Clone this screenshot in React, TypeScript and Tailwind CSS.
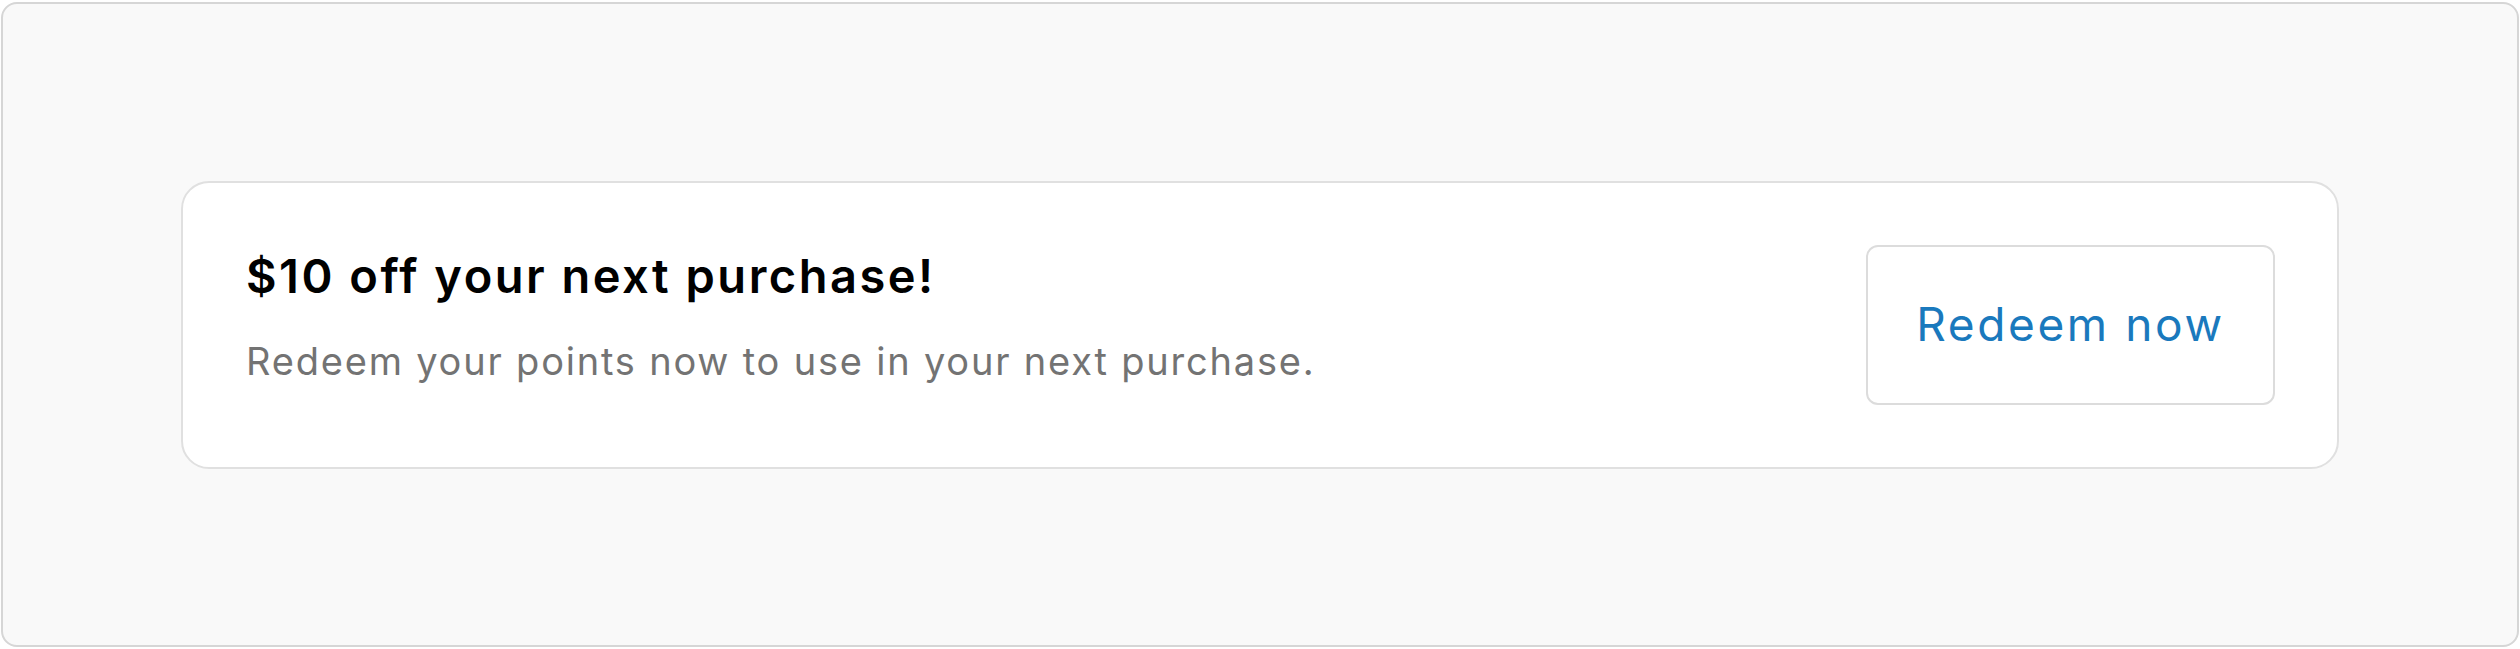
export default function App() {
  return (
    <div className="h-[649px] w-full p-[1px] pt-[2px] pb-[2px] bg-white" style={{ fontFamily: 'Inter, "Noto Sans", sans-serif' }}>
      <div className="flex h-full items-center justify-center rounded-[16px] border-2 border-[#d6d6d6] bg-[#f9f9f9] px-[178px]">
        <div className="flex w-full items-center justify-between rounded-[28px] border-2 border-[#e0e0e0] bg-white p-[62px] pl-[63px]">
          <div className="flex flex-col pb-[19px]">
            <h2 className="text-[47px] font-semibold leading-[56px] tracking-[2.5px] text-black">
              $10 off your next purchase!
            </h2>
            <p className="mt-[35px] text-[38px] leading-[44px] tracking-[1.8px] text-[#737373]">
              Redeem your points now to use in your next purchase.
            </p>
          </div>
          <button className="flex h-[160px] w-[409px] items-center justify-center rounded-[12px] border-2 border-[#dcdcdc] bg-white text-[46px] tracking-[2.6px] text-[#1a79bd]">
            Redeem now
          </button>
        </div>
      </div>
    </div>
  )
}
